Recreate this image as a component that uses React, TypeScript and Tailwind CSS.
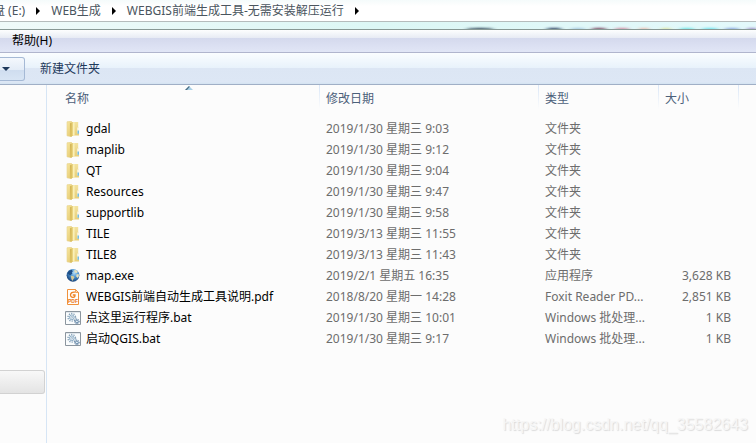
import { ReactNode } from 'react';
import { clsx } from 'clsx';

type FileKind = 'folder' | 'exe' | 'pdf' | 'bat';

interface FileEntry {
  name: string;
  modified: string;
  type: string;
  size?: string;
  kind: FileKind;
}

const files: FileEntry[] = [
  { name: 'gdal', modified: '2019/1/30 星期三 9:03', type: '文件夹', kind: 'folder' },
  { name: 'maplib', modified: '2019/1/30 星期三 9:12', type: '文件夹', kind: 'folder' },
  { name: 'QT', modified: '2019/1/30 星期三 9:04', type: '文件夹', kind: 'folder' },
  { name: 'Resources', modified: '2019/1/30 星期三 9:47', type: '文件夹', kind: 'folder' },
  { name: 'supportlib', modified: '2019/1/30 星期三 9:58', type: '文件夹', kind: 'folder' },
  { name: 'TILE', modified: '2019/3/13 星期三 11:55', type: '文件夹', kind: 'folder' },
  { name: 'TILE8', modified: '2019/3/13 星期三 11:43', type: '文件夹', kind: 'folder' },
  { name: 'map.exe', modified: '2019/2/1 星期五 16:35', type: '应用程序', size: '3,628 KB', kind: 'exe' },
  { name: 'WEBGIS前端自动生成工具说明.pdf', modified: '2018/8/20 星期一 14:28', type: 'Foxit Reader PD...', size: '2,851 KB', kind: 'pdf' },
  { name: '点这里运行程序.bat', modified: '2019/1/30 星期三 10:01', type: 'Windows 批处理...', size: '1 KB', kind: 'bat' },
  { name: '启动QGIS.bat', modified: '2019/1/30 星期三 9:17', type: 'Windows 批处理...', size: '1 KB', kind: 'bat' },
];

const FolderIcon = () => (
  <svg width="16" height="16" viewBox="0 0 16 16" aria-hidden="true">
    <defs>
      <linearGradient id="folder-front" x1="0" x2="1" y1="0" y2="1">
        <stop offset="0" stopColor="#f8e9a6" />
        <stop offset="1" stopColor="#e3c566" />
      </linearGradient>
      <linearGradient id="folder-back" x1="0" x2="0" y1="0" y2="1">
        <stop offset="0" stopColor="#f3e3a0" />
        <stop offset="1" stopColor="#e8cf78" />
      </linearGradient>
    </defs>
    <path d="M5 1h8.2v5l.8 1v7.5H6z" fill="url(#folder-back)" />
    <path d="M2 .8 6.5.3v15.4L2 14.8z" fill="url(#folder-front)" stroke="#e6d088" strokeWidth=".6" />
    <path d="M5 2.2 8 1.6v13L5.6 15.8z" fill="#d3b553" />
    <path d="M6.6 2 8 1.6v13l-1.4.7z" fill="#e9d37f" />
    <path d="M8 1.6 9.6 1v13.5H8z" fill="#faf0b8" />
    <path d="M12.4 6.5h1.4v6h-1.4z" fill="#fff" />
    <path d="M12.6 9.5h1.2v3.2h-1.2z" fill="#55b0e4" />
  </svg>
);

const GlobeIcon = () => (
  <svg width="16" height="16" viewBox="0 0 16 16" aria-hidden="true">
    <defs>
      <radialGradient id="globe" cx=".6" cy=".3" r=".75">
        <stop offset="0" stopColor="#b5ddf6" />
        <stop offset=".45" stopColor="#4b93cf" />
        <stop offset="1" stopColor="#123a72" />
      </radialGradient>
    </defs>
    <circle cx="8" cy="7.3" r="6.4" fill="url(#globe)" />
    <path d="M2.3 5.2 4 2.7l2.7-1 1.1 1.5-1 1.2.6 1.1L5.7 7l-1 .3L3.5 6z" fill="#1e4e86" />
    <path d="m5.8 7.8 2.5.3 1.2 1.4-1.2 1.7-.6 1.8-1.3-1.7z" fill="#d4c997" />
    <path d="m9.2 2 2.2.3 1.5 1.8-1.4 1-1.8-.5zM11.3 6.5l2.3-.4.3 2-1 1.8-1.6-1.2z" fill="#e9e2bb" />
  </svg>
);

const PdfIcon = () => (
  <svg width="16" height="16" viewBox="0 0 16 16" aria-hidden="true">
    <path d="M2.5.5h8l3 3v12h-11z" fill="#fffdfa" stroke="#f0913c" />
    <path d="M10.5.5v3h3z" fill="#fbdcbd" stroke="#f0913c" strokeWidth=".8" />
    <path d="M10 3.2c-2.6-.5-4.4.8-4.5 2.7 0 1.7 1.2 2.6 2.6 2.4 1.3-.1 2-1 1.9-2.3H7.8" fill="none" stroke="#ef8224" strokeWidth="1.3" />
    <text x="8" y="14" textAnchor="middle" fontSize="5" fontWeight="bold" fill="#ea761b" className="font-['Liberation_Sans',sans-serif]">
      PDF
    </text>
  </svg>
);

const BatchIcon = () => (
  <svg width="16" height="16" viewBox="0 0 16 16" aria-hidden="true">
    <path d="M.5 1.5h15v13H.5z" fill="#fafcfd" stroke="#8b959e" />
    <path d="M1 2h14v1H1z" fill="#e1e7ec" />
    <circle cx="6.8" cy="7.3" r="3.8" fill="none" stroke="#7c9ab4" strokeWidth="1.3" strokeDasharray="1.2 1.2" />
    <circle cx="6.8" cy="7.3" r="2.4" fill="#e9f2f8" stroke="#7fa1bc" strokeWidth=".9" />
    <circle cx="6.8" cy="7.3" r=".9" fill="#fff" stroke="#6489a9" strokeWidth=".5" />
    <circle cx="11.9" cy="11.4" r="2.3" fill="none" stroke="#486f96" strokeDasharray="1 .8" />
    <circle cx="11.9" cy="11.4" r="1.4" fill="#e6f1f8" stroke="#486f96" strokeWidth=".8" />
  </svg>
);

const icons: Record<FileKind, ReactNode> = {
  folder: <FolderIcon />,
  exe: <GlobeIcon />,
  pdf: <PdfIcon />,
  bat: <BatchIcon />,
};

const PathArrow = () => (
  <svg width="4" height="8" viewBox="0 0 4 8" aria-hidden="true">
    <path d="M0 0v8l4-4z" fill="#000" />
  </svg>
);

// Colours of the desktop shining through the window glass
const glassSpots = [
  { x: 30, color: '#263c50', width: 14 },
  { x: 104, color: '#15294d', width: 8 },
  { x: 128, color: '#9fc4df', width: 8 },
  { x: 149, color: '#6c2f4b', width: 8 },
  { x: 172, color: '#d0829a', width: 8 },
  { x: 194, color: '#efb7a6', width: 6 },
  { x: 216, color: '#dfe59b', width: 6 },
  { x: 237, color: '#5fe3e4', width: 8 },
  { x: 260, color: '#5fdfec', width: 9 },
  { x: 282, color: '#7f9fdd', width: 8 },
  { x: 302, color: '#9584c2', width: 6 },
];

const AddressBar = () => (
  <header>
    <nav className="flex h-[22px] items-center gap-[11px] border-b border-[#b5bcbc] bg-gradient-to-b from-[#f5fbfb] to-white to-30% text-[#4a555e]">
      <a href="#drive" className="-ml-[7px] whitespace-nowrap">盘 (E:)</a>
      <PathArrow />
      <a href="#web" className="whitespace-nowrap">WEB生成</a>
      <PathArrow />
      <a href="#webgis" className="whitespace-nowrap">WEBGIS前端生成工具-无需安装解压运行</a>
      <PathArrow />
    </nav>
    <div className="flex h-2 justify-end overflow-hidden border-b border-[#879894] bg-gradient-to-r from-[#effaf9] via-[#dcf7f5] to-[#e3f9fb]">
      <svg width="306" height="7" viewBox="0 0 306 7" aria-hidden="true">
        <filter id="glass" x="-20%" y="-100%" width="140%" height="300%">
          <feGaussianBlur stdDeviation="2 1" />
        </filter>
        {glassSpots.map((spot) => (
          <ellipse key={spot.x} cx={spot.x} cy="7.5" rx={spot.width} ry="1.5" fill={spot.color} filter="url(#glass)" />
        ))}
      </svg>
    </div>
  </header>
);

const ColumnHeader = ({ label, sorted }: { label: string; sorted?: boolean }) => (
  <th
    aria-sort={sorted ? 'ascending' : undefined}
    className="relative h-[33px] bg-[linear-gradient(#d9e6f7,#fcfcfc)] bg-[length:1px_24px] bg-right-top bg-no-repeat p-0 text-left align-top font-normal"
  >
    <button type="button" className={clsx('h-7 text-[#4c607a]', sorted ? 'pl-[18px]' : 'pl-1.5')}>
      {label}
    </button>
    {sorted && (
      <svg width="8" height="4" viewBox="0 0 8 4" className="absolute top-px left-[138px]" aria-hidden="true">
        <path d="M0 4 4 0l4 4z" fill="#a9d0e6" />
        <path d="M0 4 4 0l.7.7L2 4z" fill="#4a6c82" />
      </svg>
    )}
  </th>
);

const FileTable = () => (
  <table className="w-full table-fixed border-collapse">
    <colgroup>
      <col className="w-[273px]" />
      <col className="w-[219px]" />
      <col className="w-[120px]" />
      <col className="w-[80px]" />
      <col />
    </colgroup>
    <thead>
      <tr>
        <ColumnHeader label="名称" sorted />
        <ColumnHeader label="修改日期" />
        <ColumnHeader label="类型" />
        <ColumnHeader label="大小" />
        <td />
      </tr>
    </thead>
    <tbody className="text-[#6d6d6d]">
      {files.map((file) => (
        <tr key={file.name} className="h-[21px] whitespace-nowrap">
          <td className="p-0 pl-[18px] text-black">
            <div className="flex items-center gap-[5px]">
              {icons[file.kind]}
              <span>{file.name}</span>
            </div>
          </td>
          <td className="p-0 pl-1.5">{file.modified}</td>
          <td className="p-0 pl-1.5">{file.type}</td>
          <td className="p-0 pr-2 text-right">{file.size}</td>
          <td />
        </tr>
      ))}
    </tbody>
  </table>
);

export default function App() {
  return (
    <div className="relative flex min-h-screen flex-col overflow-hidden bg-[#fcfcfc] font-['Noto_Sans','Noto_Sans_CJK_SC',sans-serif] text-[12px] leading-4">
      <AddressBar />
      <div className="flex h-[23px] items-center border-b border-[#b0b5cd] bg-[linear-gradient(#fdfefe,#e7ebf4_8px,#d4d9ed_8px,#e1e6f6)] pl-3">
        <button type="button" className="text-black">帮助(H)</button>
      </div>
      <div className="flex h-8 items-center gap-[15px] border-b border-[#a0afc6] bg-[linear-gradient(#fafdff,#e8f2fb_15px,#dce6f4_15px,#dde7f5_29px,#d3e3f1)]">
        <button
          type="button"
          aria-label="更多选项"
          className="flex h-6 w-[25px] items-center rounded-r-[3px] border border-l-0 border-[#a5b9d5] bg-[linear-gradient(#f4f8fd,#e3ecf7_12px,#cfddef_12px,#d8e5f4)]"
        >
          <svg width="8" height="4" viewBox="0 0 8 4" className="ml-0.5" aria-hidden="true">
            <path d="M0 0h8L4 4z" fill="#1e395b" />
          </svg>
        </button>
        <button type="button" className="text-[#1e395b]">新建文件夹</button>
      </div>
      <div className="flex flex-1">
        <aside className="w-[47px] shrink-0 border-r border-[#d6e5f5] pt-[285px]">
          <button
            type="button"
            aria-label="本地磁盘 (E:)"
            className="block h-6 w-[45px] rounded-r-[3px] border border-l-0 border-[#d2d2d2] bg-gradient-to-b from-[#f8f8f8] to-[#e4e4e4]"
          />
        </aside>
        <main className="min-w-0 flex-1">
          <FileTable />
        </main>
      </div>
      <p className="absolute right-2 bottom-2 font-['Liberation_Sans',sans-serif] text-[16px] leading-5 text-[#f6f6f6] [text-shadow:1px_1px_1px_#dadada]">
        https://blog.csdn.net/qq_35582643
      </p>
    </div>
  );
}
